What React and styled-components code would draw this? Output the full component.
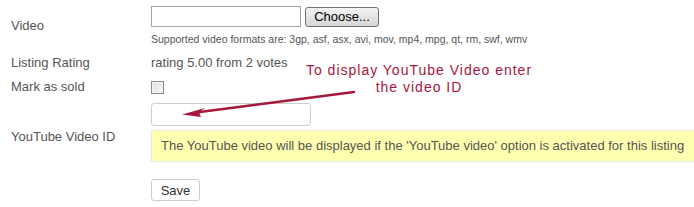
import React from "react";
import styled, { createGlobalStyle } from "styled-components";

const Global = createGlobalStyle`
  html, body { margin: 0; padding: 0; background: #fff; overflow: hidden; }
  body { font-family: "Liberation Sans", Arial, sans-serif; }
`;

const Page = styled.div`
  position: relative;
  width: 694px;
  height: 207px;
  padding: 6px 0 0 11px;
  box-sizing: border-box;
  color: #555;
  font-size: 13px;
`;

const Row = styled.div`
  display: flex;
  align-items: center;
  margin-top: ${(p) => p.$mt || 0}px;
`;

const Label = styled.div`
  width: 140px;
  flex: none;
  line-height: 16px;
  padding-top: ${(p) => p.$pt || 0}px;
  color: #555;
`;

const Field = styled.div`
  display: flex;
  flex-direction: column;
  align-items: flex-start;
  gap: ${(p) => p.$gap || 0}px;
`;

const FileLine = styled.div`
  display: flex;
  align-items: center;
  gap: 4px;
`;

const FileBox = styled.div`
  width: 150px;
  height: 21px;
  box-sizing: border-box;
  border: 1px solid #a5a5a5;
  background: #fff;
`;

const ChooseButton = styled.button`
  width: 74px;
  height: 20px;
  box-sizing: border-box;
  padding: 0;
  border: 1px solid #707070;
  border-radius: 3px;
  background: linear-gradient(#f4f4f4, #e4e4e4 50%, #d6d6d6);
  font: 13px "Liberation Sans", Arial, sans-serif;
  color: #000;
  line-height: 16px;
`;

const Hint = styled.div`
  font-size: 10.5px;
  line-height: 13px;
  color: #555;
  margin-top: 6px;
`;

const Value = styled.div`
  line-height: 16px;
  color: #555;
`;

const Check = styled.input.attrs({ type: "checkbox" })`
  appearance: none;
  margin: 1px 0 0 0;
  width: 13px;
  height: 13px;
  box-sizing: border-box;
  border: 1px solid #8c8c8c;
  background: linear-gradient(135deg, #dcdcdc, #fbfbfb);
  box-shadow: inset 0 0 0 1px #f4f4f4;
`;

const TextInput = styled.input.attrs({ type: "text" })`
  width: 160px;
  height: 23px;
  box-sizing: border-box;
  margin: 0;
  border: 1px solid #cfcfcf;
  border-radius: 3px;
  background: #fff;
  outline: none;
`;

const Notice = styled.div`
  width: 560px;
  box-sizing: border-box;
  background: #ffffb0;
  border: 1px solid #e8e8e8;
  border-right: none;
  padding: 7px 0 7px 9px;
  line-height: 16px;
  color: #555;
  white-space: nowrap;
`;

const SaveButton = styled.button`
  width: 49px;
  height: 22px;
  box-sizing: border-box;
  padding: 0;
  border: 1px solid #cccccc;
  border-radius: 3px;
  background: #fff;
  font: 13px "Liberation Sans", Arial, sans-serif;
  color: #333;
`;

const Spacer = styled.div`
  width: 140px;
  flex: none;
`;

const Annotation = styled.div`
  position: absolute;
  left: 303px;
  top: 62px;
  width: 232px;
  text-align: center;
  font-size: 14px;
  line-height: 17px;
  letter-spacing: 1px;
  color: #a8173d;
`;

const Overlay = styled.svg`
  position: absolute;
  left: 0;
  top: 0;
  pointer-events: none;
`;

export default function App() {
  return (
    <>
      <Global />
      <Page>
        <Row $mt={0}>
          <Label>Video</Label>
          <Field>
            <FileLine>
              <FileBox />
              <ChooseButton>Choose...</ChooseButton>
            </FileLine>
            <Hint>
              Supported video formats are: 3gp, asf, asx, avi, mov, mp4, mpg, qt, rm, swf, wmv
            </Hint>
          </Field>
        </Row>
        <Row $mt={9}>
          <Label>Listing Rating</Label>
          <Value>rating 5.00 from 2 votes</Value>
        </Row>
        <Row $mt={8}>
          <Label>Mark as sold</Label>
          <Check />
        </Row>
        <Row $mt={8}>
          <Label $pt={8}>YouTube Video ID</Label>
          <Field $gap={4}>
            <TextInput />
            <Notice>
              The YouTube video will be displayed if the 'YouTube video' option is activated for this listing
            </Notice>
          </Field>
        </Row>
        <Row $mt={17}>
          <Spacer />
          <SaveButton>Save</SaveButton>
        </Row>
        <Annotation>
          To display YouTube Video enter
          <br />
          the video ID
        </Annotation>
        <Overlay width="694" height="207" viewBox="0 0 694 207">
          <line x1="354" y1="92" x2="196" y2="112.5" stroke="#a8173d" strokeWidth="2.4" strokeLinecap="round" />
          <polygon points="182,114.5 205,108 199,112.6 201,117" fill="#a8173d" />
        </Overlay>
      </Page>
    </>
  );
}
